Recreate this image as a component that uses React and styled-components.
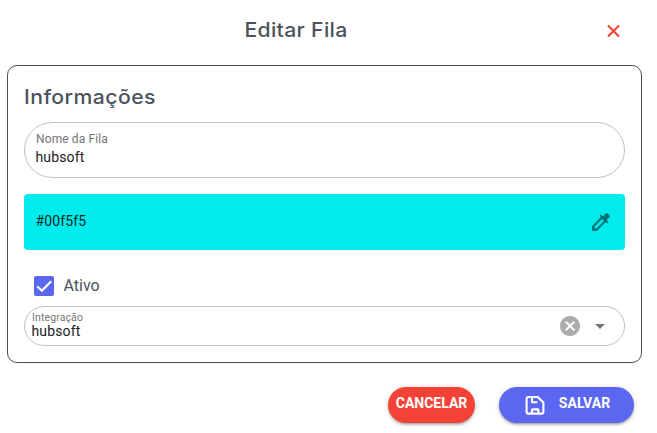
import React from "react";
import styled, { createGlobalStyle } from "styled-components";
import { MdArrowDropDown, MdCancel, MdColorize } from "react-icons/md";

const GlobalStyle = createGlobalStyle`
  *, *::before, *::after { box-sizing: border-box; }
  body { margin: 0; background: #fff; font-family: Roboto, sans-serif; }
  button, input { font-family: inherit; }
`;

const Dialog = styled.main`
  width: 657px;
  height: 433px;
  padding: 0 15px 0 7px;
  overflow: hidden;
  background: #fff;
`;

const Header = styled.header`
  display: grid;
  grid-template-columns: 1fr 57px;
  align-items: center;
  height: 65px;
  padding-bottom: 4px;
`;

const Title = styled.h1`
  margin: 0;
  padding: 0 0 2px;
  text-align: center;
  font: 500 20px/28px Inter, sans-serif;
  letter-spacing: 0.3px;
  transform: scaleX(1.06);
  color: #4b525c;
`;

const CloseButton = styled.button`
  display: flex;
  justify-content: center;
  padding: 0;
  border: 0;
  background: none;
  color: #f44336;
`;

const Card = styled.section`
  height: 298px;
  padding: 16px;
  border: 1px solid #4a4c57;
  border-radius: 10px;
`;

const SectionTitle = styled.h2`
  margin: 0;
  padding-top: 1px;
  height: 40px;
  font: 500 20px/29px Inter, sans-serif;
  letter-spacing: 0.42px;
  transform: scaleX(1.06);
  transform-origin: left;
  color: #4b525c;
`;

const Field = styled.label`
  display: flex;
  flex-direction: column;
  height: 56px;
  padding: 8px 11px;
  border: 1px solid #c2c2c2;
  border-radius: 28px;
`;

const FieldLabel = styled.span`
  font-size: ${(p) => (p.$dense ? "10.5px" : "12px")};
  line-height: ${(p) => (p.$dense ? "13px" : "16px")};
  letter-spacing: 0.12px;
  color: #757575;
`;

const FieldValue = styled.span`
  margin-left: -0.6px;
  font-size: 14px;
  line-height: ${(p) => (p.$dense ? "15px" : "20px")};
  letter-spacing: 0.15px;
  color: #212121;
`;

const ColorField = styled.div`
  display: flex;
  align-items: center;
  justify-content: space-between;
  height: 56px;
  margin-top: 16px;
  padding: 0 12.5px 0 11.5px;
  border-radius: 4px;
  background: #00ebeb;
  color: #007070;
`;

const ColorValue = styled.span`
  margin-top: -2px;
  font-size: 14px;
  letter-spacing: 0.15px;
  color: #002525;
`;

const CheckRow = styled.label`
  display: flex;
  align-items: center;
  gap: 9.5px;
  height: 20px;
  margin: 26px 0 10px 10px;
  font-size: 16px;
  line-height: 18px;
  color: #4b525c;
`;

const CheckBox = styled.span`
  display: flex;
  width: 20px;
  height: 20px;
  border-radius: 2px;
  background: #5b67f1;
`;

const SelectField = styled.div`
  display: flex;
  align-items: center;
  justify-content: space-between;
  height: 40px;
  padding: 0 12px 0 7px;
  border: 1px solid #c2c2c2;
  border-radius: 20px;
`;

const SelectText = styled.div`
  display: flex;
  flex-direction: column;
  padding-bottom: 3px;
`;

const SelectIcons = styled.div`
  display: flex;
  gap: 6px;

  svg:first-child { color: #acacac; }
  svg:last-child { color: #757575; }
`;

const Footer = styled.footer`
  display: flex;
  justify-content: flex-end;
  gap: 24px;
  padding: 24px 8px 0 0;
`;

const Button = styled.button`
  display: flex;
  align-items: center;
  justify-content: center;
  gap: 12px;
  width: ${(p) => p.$width};
  height: 36px;
  padding: 0;
  border: 0;
  border-radius: 18px;
  background: ${(p) => p.$color};
  color: #fff;
  font-size: 14px;
  font-weight: 700;
  line-height: 20px;
  box-shadow: 0 1px 5px rgba(0, 0, 0, 0.2), 0 2px 2px rgba(0, 0, 0, 0.14), 0 3px 1px -2px rgba(0, 0, 0, 0.12);
`;

const ButtonText = styled.span`
  padding-bottom: 4px;
`;

function CloseIcon() {
  return (
    <svg width="14" height="14" viewBox="0 0 14 14" fill="none" stroke="currentColor" strokeWidth="2.1">
      <path d="M1 1.5 12 12.5M12 1.5 1 12.5" />
    </svg>
  );
}

function CheckIcon() {
  return (
    <svg width="20" height="20" viewBox="0 0 20 20" fill="none" stroke="#fff" strokeWidth="2.2">
      <path d="M3.2 10.3 7.8 14.7 17.2 5.2" />
    </svg>
  );
}

function SaveIcon() {
  return (
    <svg width="24" height="24" viewBox="0 0 24 24" fill="none" stroke="currentColor" strokeWidth="2.1" strokeLinejoin="round">
      <path d="M5.4 4H14.8L20.4 9.6V19Q20.4 20.6 18.6 20.6H5.2Q3.6 20.6 3.6 19V5.8Q3.6 4 5.4 4Z" />
      <path d="M9 4V9.3H14.4M9 20.6V17Q9 16.4 9.6 16.4H14.8Q15.4 16.4 15.4 17V20.6" />
    </svg>
  );
}

export default function App() {
  return (
    <>
      <GlobalStyle />
      <Dialog>
        <Header>
          <Title>Editar Fila</Title>
          <CloseButton aria-label="Fechar"><CloseIcon /></CloseButton>
        </Header>
        <Card>
          <SectionTitle>Informações</SectionTitle>
          <Field>
            <FieldLabel>Nome da Fila</FieldLabel>
            <FieldValue>hubsoft</FieldValue>
          </Field>
          <ColorField>
            <ColorValue>#00f5f5</ColorValue>
            <MdColorize size={24} />
          </ColorField>
          <CheckRow>
            <CheckBox><CheckIcon /></CheckBox>
            Ativo
          </CheckRow>
          <SelectField>
            <SelectText>
              <FieldLabel $dense>Integração</FieldLabel>
              <FieldValue $dense>hubsoft</FieldValue>
            </SelectText>
            <SelectIcons>
              <MdCancel size={24} />
              <MdArrowDropDown size={24} />
            </SelectIcons>
          </SelectField>
        </Card>
        <Footer>
          <Button $width="87px" $color="#f44336"><ButtonText>CANCELAR</ButtonText></Button>
          <Button $width="135px" $color="#5b67f1"><SaveIcon /><ButtonText>SALVAR</ButtonText></Button>
        </Footer>
      </Dialog>
    </>
  );
}
